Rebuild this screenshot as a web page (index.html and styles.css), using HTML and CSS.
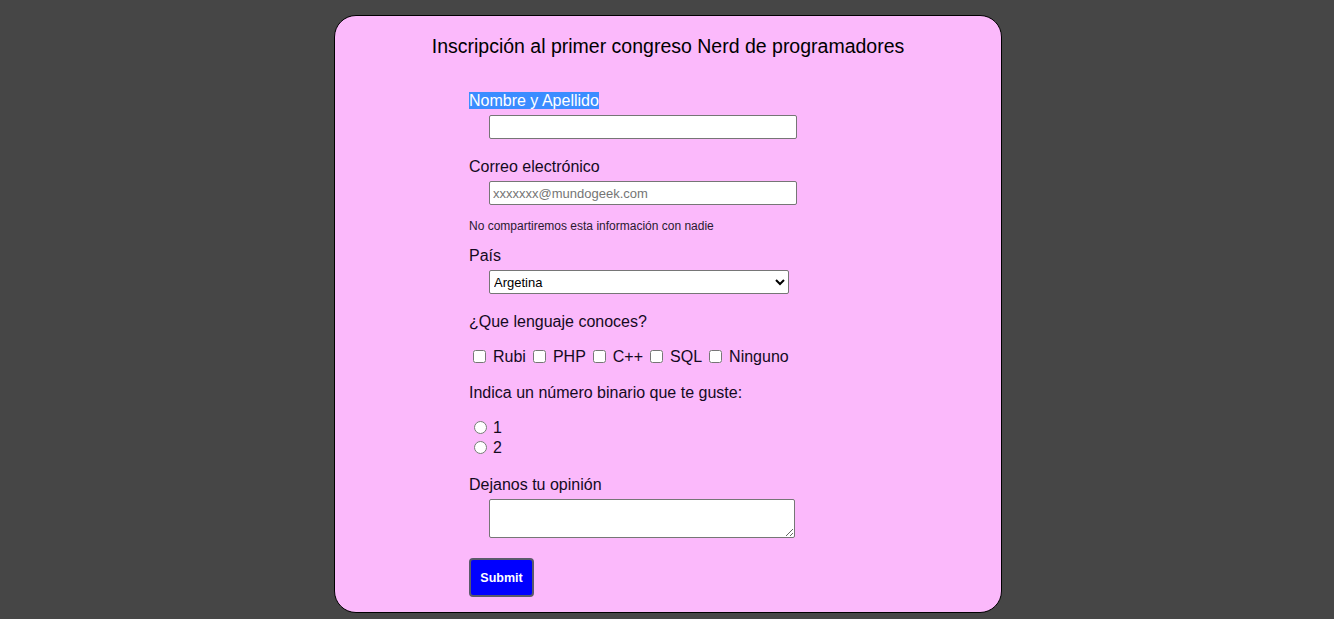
FILE: index.html
```html
<!DOCTYPE html>
<html lang="es">
<head>
<meta charset="utf-8">
<title>Congreso Nerd</title>
<link rel="stylesheet" href="styles.css">
</head>
<body>
<main class="card">
  <h1 class="title">Inscripción al primer congreso Nerd de programadores</h1>
  <form class="form">
    <label class="label label-first" for="nombre"><span class="selected">Nombre y Apellido</span></label>
    <input class="field text-field" id="nombre" type="text">

    <label class="label label-correo" for="correo">Correo electrónico</label>
    <input class="field text-field" id="correo" type="email" placeholder="xxxxxxx@mundogeek.com">
    <small class="hint">No compartiremos esta información con nadie</small>

    <label class="label label-pais" for="pais">País</label>
    <select class="field select-field" id="pais">
      <option>Argetina</option>
      <option>Chile</option>
      <option>Uruguay</option>
    </select>

    <p class="label label-lang">¿Que lenguaje conoces?</p>
    <div class="checks">
      <input type="checkbox" id="rubi"><label for="rubi">Rubi</label>
      <input type="checkbox" id="php"><label for="php">PHP</label>
      <input type="checkbox" id="cpp"><label for="cpp">C++</label>
      <input type="checkbox" id="sql"><label for="sql">SQL</label>
      <input type="checkbox" id="ninguno"><label for="ninguno">Ninguno</label>
    </div>

    <p class="label label-bin">Indica un número binario que te guste:</p>
    <div class="radios">
      <div class="radio-row"><input type="radio" name="bin" id="b1"><label for="b1">1</label></div>
      <div class="radio-row"><input type="radio" name="bin" id="b2"><label for="b2">2</label></div>
    </div>

    <label class="label label-opinion" for="opinion">Dejanos tu opinión</label>
    <textarea class="field area-field" id="opinion"></textarea>

    <button class="submit" type="submit">Submit</button>
  </form>
</main>
</body>
</html>
```

FILE: styles.css
```css
* { box-sizing: border-box; }

html, body {
  margin: 0;
  padding: 0;
  background: #464646;
  height: 100%;
}

body {
  padding: 15px 0 0 2px;
  font-family: "Liberation Sans", Arial, sans-serif;
  color: #140a1e;
}

.card {
  width: 668px;
  margin: 0 auto;
  height: 598px;
  background: #fbb9fb;
  border: 1px solid #000;
  border-radius: 22px;
  padding: 19px 0 0 134px;
}

.title {
  margin: 0 0 0 -134px;
  font-size: 19.5px;
  line-height: 23px;
  font-weight: 400;
  text-align: center;
  color: #000;
}

.form {
  display: flex;
  flex-direction: column;
  align-items: flex-start;
  margin-top: 33px;
}

.label {
  display: block;
  margin: 0;
  font-size: 16px;
  line-height: 19px;
}

.label-correo { margin-top: 18px; }
.label-pais { margin-top: 13px; }
.label-lang { margin-top: 18px; }
.label-bin { margin-top: 17px; }
.label-opinion { margin-top: 18px; }

.selected {
  background: #3b8cff;
  color: #fff;
}

.field {
  margin: 5px 0 0 20px;
  border: 1px solid #767676;
  border-radius: 2px;
  background: #fff;
}

.text-field {
  width: 308px;
  height: 24px;
  padding: 1px 3px;
  font-family: "Liberation Sans", Arial, sans-serif;
  font-size: 13px;
}

.text-field::placeholder { color: #757575; }

.hint {
  margin-top: 14px;
  font-size: 12px;
  line-height: 14px;
  color: #2a1a30;
}

.select-field {
  width: 300px;
  height: 24px;
  font-family: "Liberation Sans", Arial, sans-serif;
  font-size: 13px;
  color: #000;
}

.checks {
  display: flex;
  align-items: center;
  margin-top: 16px;
  font-size: 16px;
  line-height: 19px;
}

.checks input { margin: 3px 7px 3px 4px; width: 13px; height: 13px; }
.checks label { margin-right: 3px; }

.radios {
  margin-top: 15px;
  font-size: 16px;
}

.radio-row {
  display: flex;
  align-items: center;
  height: 20px;
  line-height: 19px;
}

.radio-row input { margin: 0 6px 0 5px; width: 13px; height: 13px; }

.area-field {
  width: 306px;
  height: 39px;
  resize: vertical;
  margin-top: 5px;
}

.submit {
  margin-top: 20px;
  width: 65px;
  height: 39px;
  background: #0000ff;
  color: #fff;
  border: 2px solid #5a5a6a;
  border-radius: 4px;
  font-family: "Liberation Sans", Arial, sans-serif;
  font-weight: 700;
  font-size: 12.5px;
}
```
